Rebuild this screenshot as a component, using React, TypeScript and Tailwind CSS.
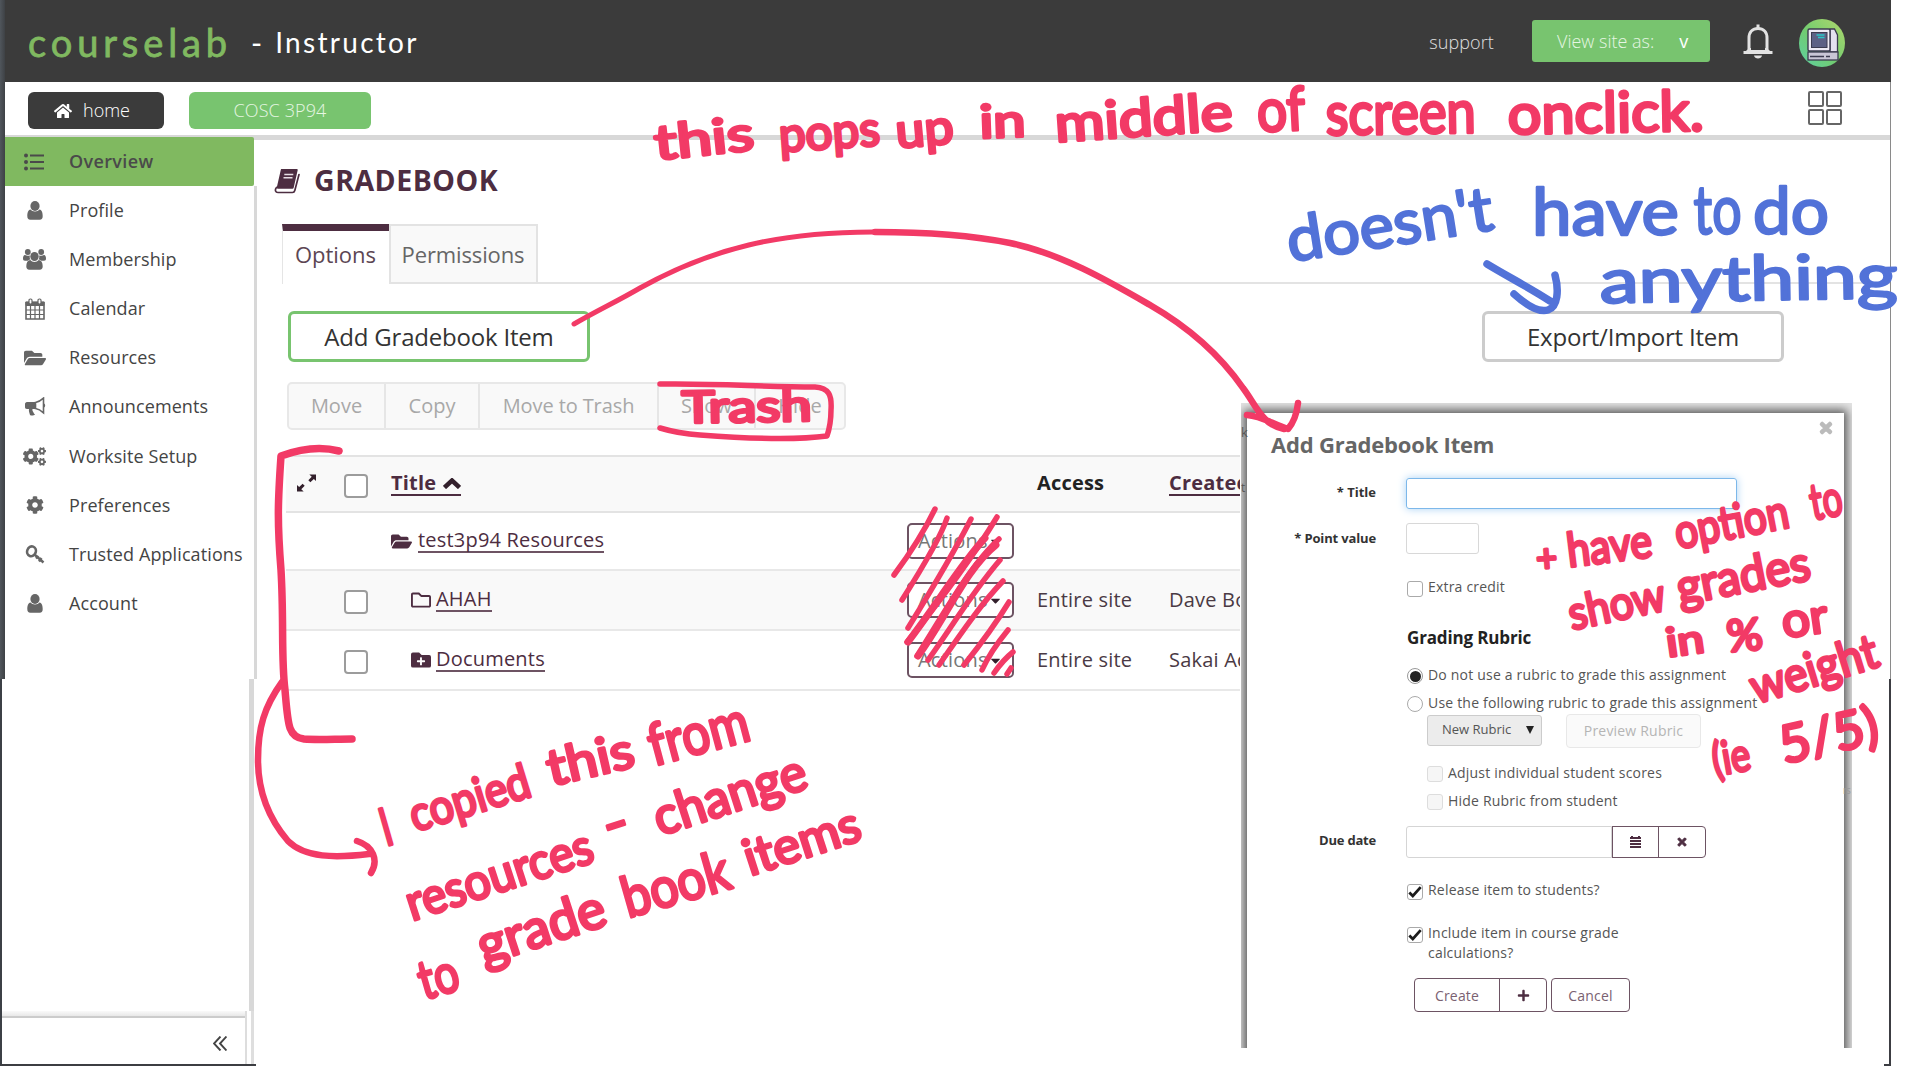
import React from "react";
import { FaUser, FaFolderOpen, FaCogs, FaCog, FaHome, FaTimes, FaPlus, FaCaretDown, FaFolderPlus, FaRegFolder } from "react-icons/fa";

const ListIcon = () => (
  <svg width="20" height="18" viewBox="0 0 20 18" fill="currentColor">
    <circle cx="2" cy="2.5" r="2" /><circle cx="2" cy="9" r="2" /><circle cx="2" cy="15.5" r="2" />
    <path d="M6 1.5h14v2H6zM6 8h14v2H6zM6 14.5h14v2H6z" />
  </svg>
);

const PersonIcon = () => (
  <svg width="16" height="19" viewBox="0 0 16 19" fill="currentColor">
    <ellipse cx="8" cy="5" rx="4.600" ry="5" />
    <path d="M3.500 8.500C1 9 .3 12 .3 15c0 2.500 1 3.800 3 3.800h9.400c2 0 3-1.300 3-3.800 0-3-.7-6-3.200-6.500-1 1.300-2.500 2-4.500 2s-3.500-.7-4.500-2z" />
  </svg>
);

const PeopleIcon = () => (
  <svg width="23" height="21" viewBox="0 0 23 21" fill="currentColor">
    <circle cx="4.800" cy="3" r="2.900" /><circle cx="18.200" cy="3" r="2.900" />
    <path d="M2 6c1.500 1 3.500 1 5 .4-.6 1.500-.3 3 .5 4.200-1 .1-2 .4-2.700 1.100H2C.6 11.700 0 11 0 9.500 0 8 .5 6 2 6zM21 6c-1.500 1-3.500 1-5 .4.6 1.500.3 3-.5 4.200 1 .1 2 .4 2.700 1.100H21c1.400 0 2-.7 2-2.200C23 8 22.500 6 21 6z" />
    <ellipse cx="11.500" cy="7.500" rx="4.200" ry="4.500" />
    <path d="M7.300 11C4.800 11.200 3.300 13.500 3.300 17.300c0 2.300 1 3.500 3 3.500h10.400c2 0 3-1.200 3-3.500 0-3.800-1.500-6.100-4-6.300-1 1.200-2.500 1.900-4.200 1.900s-3.200-.7-4.200-1.900z" />
  </svg>
);

const CalendarIcon = () => (
  <svg width="20" height="22" viewBox="0 0 20 22" fill="none" stroke="currentColor">
    <path d="M1 4.5h18V21H1z" strokeWidth="1.6" />
    <path d="M1 4h18v3.5H1z" fill="currentColor" />
    <path d="M1 12h18M1 16.5h18M5.5 8v13M10 8v13M14.5 8v13" strokeWidth="1.2" />
    <rect x="4" y="1" width="3" height="5" rx="1.3" fill="#fff" strokeWidth="1.2" />
    <rect x="13" y="1" width="3" height="5" rx="1.3" fill="#fff" strokeWidth="1.2" />
  </svg>
);

const HornIcon = () => (
  <svg width="22" height="19" viewBox="0 0 22 19" fill="currentColor">
    <path d="M3 5h8v7H8.5c-.5 1.5.5 2.500 1 3.500.5 1 .8 1.500 1.500 2-1.500 1.500-4 1.300-5 .5C5.500 16 4.500 14 5 12H3C1.500 12 1 11 1 10V7c0-1 .8-2 2-2z" />
    <path d="M11.500 5.500C14.500 5 17 3.500 19.500 1.200v14.600C17 13.500 14.500 12 11.500 11.500z" fill="none" stroke="currentColor" strokeWidth="1.600" />
    <path d="M20 6.500c1.600.5 1.600 3.500 0 4z" />
  </svg>
);

const KeyIcon = () => (
  <svg width="20" height="19" viewBox="0 0 20 19" fill="none" stroke="currentColor">
    <ellipse cx="6.500" cy="6.300" rx="4.300" ry="5" strokeWidth="2.600" transform="rotate(20 6.500 6.300)" />
    <path d="M9.500 9.500L18.500 17.500M14 16.500L16.500 13M11 13.500L13.500 11" strokeWidth="2.400" />
  </svg>
);

const BookIcon = () => (
  <svg width="26" height="25" viewBox="0 0 26 25" fill="none" stroke="#4d2d41">
    <path d="M8 1h14.500L18.500 18.500H4z" fill="#4d2d41" strokeWidth="2.400" strokeLinejoin="round" />
    <path d="M10.300 5.500h9M9.500 8.700h9" stroke="#e8dfe5" strokeWidth="1.400" />
    <path d="M2.500 18.500c-2 2.500-1 5 1.500 5h14.500c1.500 0 2-.8 2.300-2L25 5.500" strokeWidth="1.700" strokeLinecap="round" />
  </svg>
);

const BellIcon = () => (
  <svg width="30" height="35" viewBox="0 0 30 35" fill="none" stroke="#e2e2e2" strokeWidth="3">
    <path d="M1 28.500L6.500 24h17l5.500 4.500z" fill="#e2e2e2" stroke="none" />
    <path d="M8 8v18h14V8z" stroke="none" fill="#3b3b3b" />
    <path d="M6 26V14c0-6 3.500-9.500 9-9.500s9 3.500 9 9.500v12" />
    <path d="M0.500 28.500h29M15 0.500v4" />
    <path d="M11 31.500h8c-.5 4-7.500 4-8 0z" fill="#e2e2e2" stroke="none" />
  </svg>
);

const Avatar = () => (
  <svg width="46" height="48" viewBox="0 0 46 48">
    <defs>
      <linearGradient id="av" x1="1" y1="0" x2="0" y2="1">
        <stop offset="0" stopColor="#b2d86c" /><stop offset=".55" stopColor="#72cc70" /><stop offset="1" stopColor="#5ccfa5" />
      </linearGradient>
    </defs>
    <ellipse cx="23" cy="24" rx="23" ry="24" fill="url(#av)" />
    <path d="M31 10h4.500l3 6v17h-7.500z" fill="#e4e0f0" stroke="#3c3b50" strokeWidth="1.300" />
    <rect x="9" y="10" width="22" height="22" rx="1.500" fill="#eeeaf5" stroke="#3c3b50" strokeWidth="1.400" />
    <rect x="12.500" y="13.500" width="15.500" height="15" fill="#5d6085" stroke="#3c3b50" />
    <path d="M17.500 16h8M19 18.500h6.500" stroke="#2bc5c8" strokeWidth="1.400" />
    <rect x="9" y="33" width="30" height="8" fill="#c9c6d6" stroke="#3c3b50" strokeWidth="1.300" />
    <path d="M11 37.500h14M27 37.500h4" stroke="#3c3b50" strokeWidth="1.300" />
  </svg>
);

const nav: [string, React.ReactNode][] = [
  ["Profile", <PersonIcon />],
  ["Membership", <PeopleIcon />],
  ["Calendar", <CalendarIcon />],
  ["Resources", <FaFolderOpen size={22} />],
  ["Announcements", <HornIcon />],
  ["Worksite Setup", <FaCogs size={23} />],
  ["Preferences", <FaCog size={18} />],
  ["Trusted Applications", <KeyIcon />],
  ["Account", <PersonIcon />],
];

function Header() {
  return (
    <header className="flex h-[82px] items-center bg-[#3b3b3b] pl-[23px] pr-[46px] text-white">
      <span className="w-[203px] whitespace-nowrap pt-[2px] font-['Lato'] text-[38px] leading-[40px] tracking-[4.9px] text-[#80b960] [-webkit-text-stroke:0.8px_#80b960]">courselab</span>
      <span className="ml-[20px] whitespace-nowrap pt-[2px] font-['Lato'] text-[30px] tracking-[2px]">-</span>
      <span className="ml-[11px] whitespace-nowrap pt-[2px] font-['Lato'] text-[28px] tracking-[2.3px]">Instructor</span>
      <span className="ml-auto pt-[2px] text-[18px] font-light tracking-[0.1px] text-[#e0e0e0]">support</span>
      <button className="ml-[38px] flex h-[42px] w-[178px] items-center rounded-[3px] bg-[#78c46f] pl-[25px] text-[18px] font-light text-[#e6f6e3]">
        View site as:<b className="ml-[25px] text-white">v</b>
      </button>
      <div className="ml-[33px]"><BellIcon /></div>
      <div className="ml-[26px] pt-[3px]"><Avatar /></div>
    </header>
  );
}

function TopNav() {
  return (
    <nav className="flex h-[58px] items-start border-b-[5px] border-[#d8d8d8] bg-white pl-[23px] pr-[49px] pt-[10px]">
      <button className="flex h-[37px] w-[136px] items-center rounded-[6px] bg-[#3b3b3b] pl-[26px] text-[18px] font-light text-white">
        <FaHome size={18} /><span className="ml-[11px] tracking-[0px]">home</span>
      </button>
      <button className="ml-[25px] h-[37px] w-[182px] rounded-[6px] bg-[#78c46f] text-[18px] font-light tracking-[0.1px] text-[#e6f6e3]">COSC 3P94</button>
      <div className="-mt-px ml-auto grid grid-cols-2 gap-[2px]">
        {[0, 1, 2, 3].map((i) => <i key={i} className="h-[16px] w-[16px] rounded-[2px] border-2 border-[#666]" />)}
      </div>
    </nav>
  );
}

function Sidebar() {
  return (
    <aside className="-mt-[3px] flex w-[252px] shrink-0 flex-col">
      <div className="flex h-[49px] w-[249px] items-center rounded-r-[2px] bg-[#80b960] text-[18px] font-semibold tracking-[0.35px] text-[#4a4a4a]">
        <span className="flex w-[64px] justify-start pl-[19px]"><ListIcon /></span>Overview
      </div>
      <div className="flex h-[493px] flex-col border-r-[3px] border-[#d8d8d8] text-[18px] tracking-[0.1px] text-[#444]">
        {nav.map(([t, icon]) => (
          <div key={t} className="flex h-[49.1px] items-center">
            <span className="flex w-[59px] justify-center text-[#666]">{icon}</span>
            <span className="ml-[5px] whitespace-nowrap">{t}</span>
          </div>
        ))}
      </div>
      <div className="-ml-[3px] h-[332px] w-[252px] border-r-[5px] border-[#d8d8d8]" />
      <div className="-ml-[3px] flex h-[53px] w-[252px] border-r-[3px] border-[#dedede]">
        <div className="flex w-[245px] flex-col border-r-2 border-[#ddd]">
          <div className="h-[7px] border-b-2 border-[#ccc] bg-gradient-to-b from-[#fafafa] to-[#e8e8e8]" />
          <div className="flex grow items-center justify-end pr-[18px] pt-[4px] text-[#444]">
            <svg width="14" height="15" viewBox="0 0 14 15" fill="none" stroke="currentColor" strokeWidth="1.900"><path d="M7.500.5L1 7.500l6.500 7M13.500.5L7 7.500l6.500 7" /></svg>
          </div>
        </div>
      </div>
      <div className="-ml-[5px] h-[2px] w-[256px] bg-[#3c3d42]" />
    </aside>
  );
}

const Check = ({ show = true }: { show?: boolean }) => (
  <span className={show ? "h-[24px] w-[24px] rounded-[4px] border-2 border-[#9c9c9c] bg-white" : "h-[24px] w-[24px]"} />
);

const rows = [
  { name: "test3p94 Resources", icon: <FaFolderOpen size={21} />, indent: "pl-0", gap: "w-[27px]", check: false, access: "", by: "", cls: "h-[58px]" },
  { name: "AHAH", icon: <FaRegFolder size={20} />, indent: "pl-[20px]", gap: "w-[25px]", check: true, access: "Entire site", by: "Dave Bo", cls: "h-[60px] bg-[#f9f9f9]" },
  { name: "Documents", icon: <FaFolderPlus size={20} />, indent: "pl-[20px]", gap: "w-[25px]", check: true, access: "Entire site", by: "Sakai Ad", cls: "h-[60px]" },
];

function Content() {
  return (
    <main className="w-[1633px]">
      <h1 className="flex h-[53px] items-end pl-[17px] text-[28.5px] font-bold leading-[36px] tracking-[0.5px] text-[#4d2d41]">
        <span className="-mb-[1px]"><BookIcon /></span><span className="-mb-[5px] ml-[14px]">GRADEBOOK</span>
      </h1>
      <div className="mt-[31px] flex h-[60px] pl-[25px] text-[22px] text-[#5c4653]">
        <div className="flex w-[107px] justify-center border-l border-t-[7px] border-l-[#e5e5e5] border-t-[#4d2d41] pr-px pt-[7px]">Options</div>
        <div className="flex w-[149px] justify-center border-2 border-[#e3e3e3] bg-[#f9f9f9] pr-px pt-[12px] tracking-[-0.12px] text-[#666]">Permissions</div>
        <div className="grow border-b-2 border-[#e3e3e3]" />
      </div>
      <div className="mt-[28px] flex justify-between pl-[31px] pr-[106px]">
        <button className="-mt-px h-[51px] w-[302px] rounded-[6px] border-[3px] border-[#78c46f] text-[24px] tracking-[-0.2px] text-[#333]">Add Gradebook Item</button>
        <button className="-mt-px h-[51px] w-[302px] rounded-[6px] border-[3px] border-[#ccc] text-[24px] tracking-[-0.2px] text-[#333]">Export/Import Item</button>
      </div>
      <div className="ml-[30px] mt-[20px] flex h-[48px] w-[559px] divide-x-2 divide-[#e6e6e6] rounded-[5px] border-2 border-[#e8e8e8] bg-[#f9f9f9] text-[20px] text-[#a8a8a8]">
        <span className="flex w-[97px] items-center justify-center">Move</span>
        <span className="flex w-[94px] items-center justify-center">Copy</span>
        <span className="flex w-[179px] items-center justify-center tracking-[-0.1px]">Move to Trash</span>
        <span className="flex w-[97px] items-center justify-center">Show</span>
        <span className="flex grow items-center justify-center">Hide</span>
      </div>
      <div className="ml-[29px] mt-[25px] w-[954px] overflow-hidden whitespace-nowrap text-[20px] tracking-[0.2px] text-[#4a3a44]">
        <div className="flex h-[58px] items-center border-b-2 border-t-2 border-[#e3e3e3] bg-[#f9f9f9] font-bold text-[#4d2d41]">
          <svg className="-mt-[2px] ml-[11px] shrink-0" width="19" height="20" viewBox="0 0 20 20" fill="#33202c"><path d="M13 1h7v7l-2.300-2.300-3.600 3.600-2.200-2.200 3.600-3.600zM7 19H0v-7l2.300 2.300 3.600-3.600 2.200 2.200-3.600 3.600z" /></svg>
          <span className="ml-[28px] mt-[3px] flex shrink-0"><Check /></span>
          <span className="ml-[23px] flex h-[25px] w-[646px] shrink-0 items-start">
            <span className="flex h-[24px] items-center border-b-2 border-[#4d2d41]">Title
              <svg className="ml-[7px] mt-[2px]" width="18" height="11" viewBox="0 0 18 11" fill="none" stroke="#33202c" strokeWidth="4.500"><path d="M1.500 9.500L9 2.500l7.500 7" /></svg>
            </span>
          </span>
          <span className="-mt-[2px] w-[132px] shrink-0 text-[#222]">Access</span>
          <span className="border-b-2 border-[#4d2d41] leading-[22px]">Created</span>
        </div>
        {rows.map((r) => (
          <div key={r.name} className={"flex items-center border-b-2 border-[#e8e8e8] " + r.cls}>
            <span className="ml-[58px] mt-[3px] flex shrink-0"><Check show={r.check} /></span>
            <span className={"ml-[23px] flex w-[516px] shrink-0 items-center text-[#4d2d41] " + r.indent}>
              <span className={r.gap}>{r.icon}</span>
              <span className="border-b-2 border-[#6d5363] leading-[22px]">{r.name}</span>
            </span>
            <span className="flex h-[36px] w-[107px] shrink-0 items-center justify-between rounded-[5px] border-2 border-[#6d5363] bg-white pl-[9px] pr-[9px] text-[#777]">
              Actions<FaCaretDown size={15} color="#33202c" />
            </span>
            <span className="-mt-[1px] ml-[23px] w-[132px] shrink-0">{r.access}</span>
            <span className="-mt-[1px]">{r.by}</span>
          </div>
        ))}
      </div>
    </main>
  );
}

const Box = ({ k = "" }: { k?: string }) => (
  <span className={"relative flex h-[16px] w-[16px] shrink-0 items-center justify-center rounded-[3px] border " + (k === "off" ? "border-[#ddd] bg-[#f6f6f6]" : "border-[#aaa] bg-white")}>
    {k === "on" && <svg width="16" height="14" viewBox="0 0 16 14" fill="none" stroke="#1c1c1c" strokeWidth="3.200"><path d="M1.500 7.500l4 4L14.500 1.500" /></svg>}
  </span>
);

function Modal() {
  return (
    <section className="absolute left-[1241px] top-[403px] h-[645px] w-[611px] overflow-hidden bg-[#e4e4e4] text-[14px] tracking-[0.2px] text-[#555]">
      <div className="ml-[6px] mt-[10px] h-[650px] w-[597px] bg-white pt-[16px] shadow-[0_0_9px_3px_#555]">
        <div className="flex h-[30px] items-center justify-between pl-[24px] pr-[10px]">
          <h2 className="text-[22px] font-bold tracking-[-0.2px] text-[#666]">Add Gradebook Item</h2>
          <FaTimes size={16} color="#bbb" stroke="#bbb" strokeWidth={50} className="-mt-[32px]" />
        </div>
        <div className="mt-[19px] flex items-center text-[#333]">
          <b className="-mt-[2px] w-[129px] text-right text-[13px] tracking-normal">* Title</b>
          <span className="ml-[30px] h-[31px] w-[331px] rounded-[3px] border-[1.5px] border-[#7db8ea] shadow-[0_0_8px_#a9d2f5]" />
        </div>
        <div className="mt-[14px] flex items-center text-[#333]">
          <b className="w-[129px] text-right text-[13px] tracking-[-0.15px]">* Point value</b>
          <span className="ml-[30px] h-[31px] w-[73px] rounded-[3px] border-[1.5px] border-[#d8d8d8]" />
        </div>
        <div className="ml-[160px] flex flex-col">
          <div className="mt-[20px] flex h-[24px] items-center"><span className="mt-[5px]"><Box /></span><span className="ml-[5px]">Extra credit</span></div>
          <b className="mt-[28px] h-[24px] text-[17px] leading-[24px] tracking-[-0.15px] text-[#222]">Grading Rubric</b>
          <div className="mt-[12px] flex h-[24px] items-center">
            <span className="mt-[4px] flex h-[16px] w-[16px] items-center justify-center rounded-full border border-[#999]"><i className="h-[11px] w-[11px] rounded-full bg-[#222]" /></span>
            <span className="ml-[5px]">Do not use a rubric to grade this assignment</span>
          </div>
          <div className="mt-[4px] flex h-[24px] items-center">
            <span className="mt-[4px] h-[16px] w-[16px] rounded-full border border-[#aaa]" />
            <span className="ml-[5px]">Use the following rubric to grade this assignment</span>
          </div>
          <div className="ml-[20px] flex h-[34px] items-center">
            <span className="-mt-[2px] flex h-[31px] w-[115px] items-center justify-between rounded-[3px] border border-[#ccc] bg-[#ececec] pl-[14px] pr-[7px] text-[13px] tracking-normal">New Rubric
              <svg width="8" height="8" viewBox="0 0 8 8" fill="#222"><path d="M0 0h8L4 8z" /></svg></span>
            <span className="ml-[24px] flex h-[34px] w-[135px] items-center justify-center rounded-[4px] border border-[#e8e8e8] bg-[#fafafa] pb-[2px] text-[#b5b5b5]">Preview Rubric</span>
          </div>
          <div className="ml-[20px] mt-[12px] flex h-[24px] items-center"><span className="mt-[4px]"><Box k="off" /></span><span className="ml-[5px]">Adjust individual student scores</span></div>
          <div className="ml-[20px] mt-[4px] flex h-[24px] items-center"><span className="mt-[4px]"><Box k="off" /></span><span className="ml-[5px]">Hide Rubric from student</span></div>
        </div>
        <div className="mt-[14px] flex h-[32px] items-center">
          <b className="-mt-[2px] w-[129px] text-right text-[13px] tracking-[-0.2px] text-[#333]">Due date</b>
          <span className="ml-[30px] h-[32px] w-[206px] rounded-l-[3px] border border-[#d5d5d5]" />
          <span className="flex h-[32px] w-[47px] items-center justify-center border border-[#6d5363]">
            <svg width="11" height="12" viewBox="0 0 11 12" stroke="#4d2d41" strokeWidth="2"><path d="M2 0v3M9 0v3" /><path d="M0 2h11M0 5h11M0 8h11M0 11h11" /></svg>
          </span>
          <span className="-ml-px flex h-[32px] w-[48px] items-center justify-center rounded-r-[4px] border border-[#6d5363]"><FaTimes size={12} color="#4d2d41" strokeWidth={40} stroke="#4d2d41" /></span>
        </div>
        <div className="ml-[160px]">
          <div className="mt-[19px] flex h-[24px] items-center"><span className="mt-[6px]"><Box k="on" /></span><span className="ml-[5px]">Release item to students?</span></div>
          <div className="mt-[22px] flex items-start leading-[20px]"><span className="mt-[4px]"><Box k="on" /></span><span className="ml-[5px]">Include item in course grade<br />calculations?</span></div>
          <div className="ml-[7px] mt-[15px] flex h-[34px] text-[14px] text-[#7a6171]">
            <span className="flex w-[86px] items-center justify-center rounded-l-[4px] border border-[#6d5363]">Create</span>
            <span className="-ml-px flex w-[48px] items-center justify-center rounded-r-[4px] border border-[#6d5363]"><FaPlus size={13} color="#4d2d41" /></span>
            <span className="ml-[4px] flex w-[79px] items-center justify-center rounded-[4px] border border-[#6d5363]">Cancel</span>
          </div>
        </div>
      </div>
      <span className="absolute left-0 top-[20px] text-[13px] tracking-normal">k</span>
      <span className="absolute left-0 top-[76px] text-[12px] tracking-normal">t</span>
      <span className="absolute left-[602px] top-[380px] text-[10px] tracking-[-1px] text-[#999]">rs</span>
    </section>
  );
}

type Note = [string, number, number, number, number, number];
const pinkNotes: Note[] = [
  ["this", 656, 160, 100, -6, 48], ["pops", 780, 152, 101, -4, 48], ["up", 897, 148, 58, -5, 48], ["in", 980, 138, 46, -2, 46],
  ["middle", 1056, 142, 178, -4, 52], ["of", 1258, 132, 48, -3, 60], ["screen", 1326, 135, 150, -1, 60], ["onclick.", 1508, 134, 196, -1, 56],
  ["Trash", 682, 423, 130, -1, 44],
  ["I", 386, 846, 10, -16, 52], ["copied", 415, 832, 124, -17, 48], ["this", 551, 786, 88, -13, 50], ["from", 654, 766, 102, -15, 58],
  ["resources", 412, 921, 194, -18, 50], ["–", 609, 846, 26, -18, 60], ["change", 660, 836, 158, -18, 52],
  ["to", 424, 1000, 40, -16, 54], ["grade", 484, 965, 132, -18, 54], ["book", 628, 918, 110, -16, 56], ["items", 750, 876, 120, -18, 50],
  ["+", 1537, 572, 21, -4, 38], ["have", 1569, 567, 85, -7, 47], ["option", 1678, 549, 115, -11, 47], ["to", 1813, 520, 32, -10, 50],
  ["show", 1572, 630, 98, -12, 46], ["grades", 1680, 605, 135, -11, 49], ["in", 1668, 657, 38, -8, 40], ["%", 1728, 652, 36, -5, 44], ["or", 1784, 638, 46, -8, 48],
  ["weight", 1756, 704, 131, -17, 48], ["(ie", 1715, 776, 38, -10, 46], ["5/5)", 1784, 764, 100, -13, 52],
];
const blueNotes: Note[] = [
  ["doesn't", 1290, 262, 208, -9, 62], ["have", 1532, 235, 147, 0, 66], ["to", 1694, 234, 48, -1, 68], ["do", 1753, 234, 76, 0, 66], ["anything", 1600, 303, 298, -1, 62],
];

const Words = ({ list, color, thick }: { list: Note[]; color: string; thick: number }) => (
  <g fill={color} stroke={color} strokeWidth={thick} strokeLinejoin="round" className="font-['Lato'] font-normal">
    {list.map(([t, x, y, w, r, s], i) => (
      <text key={i} transform={`translate(${x} ${y}) rotate(${r})`} textLength={w} lengthAdjust="spacingAndGlyphs" fontSize={s}>{t}</text>
    ))}
  </g>
);

function Annotations() {
  return (
    <svg className="pointer-events-none absolute left-0 top-0" width="1920" height="1080" viewBox="0 0 1920 1080" fill="none" strokeLinecap="round" strokeLinejoin="round">
      <g stroke="#f23a66">
        <path strokeWidth="5" d="M574 324C600 309 616 302 640 288C710 249 780 231 880 232" />
        <path strokeWidth="6.500" d="M875 232C930 232 970 235 1010 243C1060 253 1110 282 1150 305C1190 328 1220 355 1243 388C1256 405 1262 425 1284 429M1247 415C1262 416 1272 424 1288 429C1295 421 1297 412 1298 403" />
        <path strokeWidth="7.500" d="M339 451C320 446 300 449 281 456C278 500 277 520 281 570C284 620 281 660 285 690C288 725 288 737 304 739C318 740 335 739 352 739" />
        <path strokeWidth="6.500" d="M282 682C264 707 258 728 258 760C258 795 270 820 288 841C305 858 335 858 369 854M357 841C373 846 379 860 371 873" />
        <path strokeWidth="5.500" d="M660 384C720 383 760 387 815 387C829 388 832 395 831 410C831 420 829 430 827 436C790 441 740 438 700 435C685 434 670 431 660 428" />
        <path strokeWidth="5.500" d="M935 509Q920 540 894 575M947 518Q940 540 902 600M971 519Q950 560 908 628M997 517Q965 570 907 642M999 539C970 565 940 620 917 656M1000 560C970 595 950 630 928 660M1003 581C980 605 960 635 939 665M1009 602C995 625 980 645 964 665M1008 630Q990 652 982 670M1013 652Q1003 660 994 673M1011 668L1007 674" />
        <path strokeWidth="7" d="M985 538C960 565 940 600 908 642M996 545C965 570 945 620 918 656" />
      </g>
      <path stroke="#5272d8" strokeWidth="7.500" d="M1487 264C1505 275 1530 288 1550 301M1555 275C1559 290 1558 307 1548 310C1538 313 1524 303 1514 294" />
      <Words list={pinkNotes} color="#f23a66" thick={3.2} />
      <Words list={blueNotes} color="#5272d8" thick={2.4} />
    </svg>
  );
}

export default function App() {
  return (
    <div className="relative h-[1080px] w-[1920px] overflow-hidden bg-white font-['Open_Sans',sans-serif]">
      <div className="flex">
        <div className="flex w-[5px] flex-col items-start">
          <div className="h-[679px] w-[5px] bg-gradient-to-r from-[#50565c] to-[#3e4145]" />
          <div className="h-[387px] w-[2px] bg-[#3c4046]" />
        </div>
        <div className="w-[1886px]">
          <Header />
          <TopNav />
          <div className="flex"><Sidebar /><Content /></div>
        </div>
      </div>
      <div className="absolute left-[1884px] top-[82px] flex h-[984px] w-[7px] flex-col items-end">
        <div className="h-[597px] w-px bg-[#8a8a8a]" />
        <div className="h-[385px] w-[2px] bg-[#3c3d42]" />
        <div className="h-[2px] w-[7px] bg-[#3c3d42]" />
      </div>
      <Modal />
      <Annotations />
    </div>
  );
}
